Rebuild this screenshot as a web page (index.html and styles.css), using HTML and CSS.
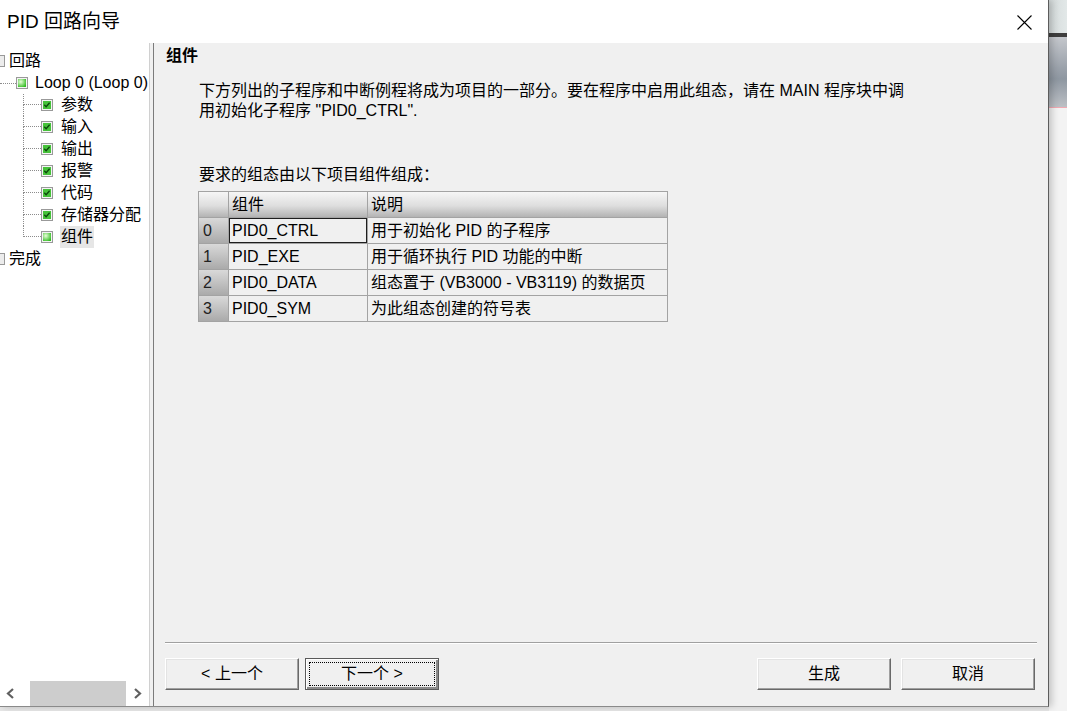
FILE: index.html
```html
<!DOCTYPE html>
<html lang="zh-CN">
<head>
<meta charset="utf-8">
<title>PID 回路向导</title>
<link rel="stylesheet" href="styles.css">
</head>
<body>
<div class="window">
  <div class="titlebar">
    <span class="title">PID 回路向导</span>
    <svg class="close" width="15" height="15" viewBox="0 0 15 15"><path d="M0.5 0.5L14.5 14.5M14.5 0.5L0.5 14.5" stroke="#000" stroke-width="1.1" fill="none"/></svg>
  </div>
  <div class="main">
    <div class="tree">
      <div class="tree-list">
        <div class="row root">
          <svg class="icon root-icon" width="9" height="12" viewBox="0 0 9 12"><rect x="0.5" y="0.5" width="8" height="11" fill="#ececec" stroke="#999"/></svg>
          <span class="label">回路</span>
        </div>
        <div class="row loop">
          <span class="hconn"></span>
          <svg class="icon" width="12" height="12" viewBox="0 0 12 12"><defs><radialGradient id="g1" cx="0.35" cy="0.35" r="0.75"><stop offset="0" stop-color="#e8ffd8"/><stop offset="1" stop-color="#34bc24"/></radialGradient></defs><rect x="0.5" y="0.5" width="11" height="11" fill="#f4f4f4" stroke="#999"/><rect x="2" y="2" width="8" height="8" fill="url(#g1)"/></svg>
          <span class="label">Loop 0 (Loop 0)</span>
        </div>
        <div class="children">
          <div class="row child">
            <span class="conn"><i class="up"></i><i class="down"></i></span>
            <svg class="icon" width="12" height="12" viewBox="0 0 12 12"><rect x="0.5" y="0.5" width="11" height="11" fill="#f4f4f4" stroke="#999"/><rect x="2" y="2" width="8" height="8" fill="#46c23a"/><path d="M3.3 5.8l1.8 1.9 3.5-4" stroke="#0b460b" stroke-width="1.3" fill="none"/></svg>
            <span class="label">参数</span>
          </div>
          <div class="row child">
            <span class="conn"><i class="up"></i><i class="down"></i></span>
            <svg class="icon" width="12" height="12" viewBox="0 0 12 12"><rect x="0.5" y="0.5" width="11" height="11" fill="#f4f4f4" stroke="#999"/><rect x="2" y="2" width="8" height="8" fill="#46c23a"/><path d="M3.3 5.8l1.8 1.9 3.5-4" stroke="#0b460b" stroke-width="1.3" fill="none"/></svg>
            <span class="label">输入</span>
          </div>
          <div class="row child">
            <span class="conn"><i class="up"></i><i class="down"></i></span>
            <svg class="icon" width="12" height="12" viewBox="0 0 12 12"><rect x="0.5" y="0.5" width="11" height="11" fill="#f4f4f4" stroke="#999"/><rect x="2" y="2" width="8" height="8" fill="#46c23a"/><path d="M3.3 5.8l1.8 1.9 3.5-4" stroke="#0b460b" stroke-width="1.3" fill="none"/></svg>
            <span class="label">输出</span>
          </div>
          <div class="row child">
            <span class="conn"><i class="up"></i><i class="down"></i></span>
            <svg class="icon" width="12" height="12" viewBox="0 0 12 12"><rect x="0.5" y="0.5" width="11" height="11" fill="#f4f4f4" stroke="#999"/><rect x="2" y="2" width="8" height="8" fill="#46c23a"/><path d="M3.3 5.8l1.8 1.9 3.5-4" stroke="#0b460b" stroke-width="1.3" fill="none"/></svg>
            <span class="label">报警</span>
          </div>
          <div class="row child">
            <span class="conn"><i class="up"></i><i class="down"></i></span>
            <svg class="icon" width="12" height="12" viewBox="0 0 12 12"><rect x="0.5" y="0.5" width="11" height="11" fill="#f4f4f4" stroke="#999"/><rect x="2" y="2" width="8" height="8" fill="#46c23a"/><path d="M3.3 5.8l1.8 1.9 3.5-4" stroke="#0b460b" stroke-width="1.3" fill="none"/></svg>
            <span class="label">代码</span>
          </div>
          <div class="row child">
            <span class="conn"><i class="up"></i><i class="down"></i></span>
            <svg class="icon" width="12" height="12" viewBox="0 0 12 12"><rect x="0.5" y="0.5" width="11" height="11" fill="#f4f4f4" stroke="#999"/><rect x="2" y="2" width="8" height="8" fill="#46c23a"/><path d="M3.3 5.8l1.8 1.9 3.5-4" stroke="#0b460b" stroke-width="1.3" fill="none"/></svg>
            <span class="label">存储器分配</span>
          </div>
          <div class="row child">
            <span class="conn"><i class="up"></i><i class="down last"></i></span>
            <svg class="icon" width="12" height="12" viewBox="0 0 12 12"><defs><radialGradient id="g2" cx="0.35" cy="0.35" r="0.75"><stop offset="0" stop-color="#e8ffd8"/><stop offset="1" stop-color="#34bc24"/></radialGradient></defs><rect x="0.5" y="0.5" width="11" height="11" fill="#f4f4f4" stroke="#999"/><rect x="2" y="2" width="8" height="8" fill="url(#g2)"/></svg>
            <span class="label selected">组件</span>
          </div>
        </div>
        <div class="row root">
          <svg class="icon root-icon" width="9" height="12" viewBox="0 0 9 12"><rect x="0.5" y="0.5" width="8" height="11" fill="#ececec" stroke="#999"/></svg>
          <span class="label">完成</span>
        </div>
      </div>
      <div class="hscroll">
        <span class="arrow arrow-left"><svg width="10" height="11" viewBox="0 0 10 11"><path d="M8 1L3 5.5L8 10" stroke="#606060" stroke-width="2.2" fill="none"/></svg></span>
        <span class="thumb"></span>
        <span class="arrow arrow-right"><svg width="10" height="11" viewBox="0 0 10 11"><path d="M2 1L7 5.5L2 10" stroke="#606060" stroke-width="2.2" fill="none"/></svg></span>
      </div>
    </div>
    <div class="splitter"></div>
    <div class="content">
      <div class="heading">组件</div>
      <p class="intro">下方列出的子程序和中断例程将成为项目的一部分。要在程序中启用此组态，请在 MAIN 程序块中调<br>用初始化子程序 "PID0_CTRL".</p>
      <p class="req">要求的组态由以下项目组件组成：</p>
      <div class="grid">
        <div class="hd corner"></div>
        <div class="hd">组件</div>
        <div class="hd">说明</div>

        <div class="rh">0</div>
        <div class="cell focus">PID0_CTRL</div>
        <div class="cell">用于初始化 PID 的子程序</div>

        <div class="rh">1</div>
        <div class="cell">PID_EXE</div>
        <div class="cell">用于循环执行 PID 功能的中断</div>

        <div class="rh">2</div>
        <div class="cell">PID0_DATA</div>
        <div class="cell">组态置于 (VB3000 - VB3119) 的数据页</div>

        <div class="rh">3</div>
        <div class="cell">PID0_SYM</div>
        <div class="cell">为此组态创建的符号表</div>
      </div>
      <div class="footer">
        <div class="sep"></div>
        <div class="buttons">
          <button class="btn">&lt; 上一个</button>
          <button class="btn default"><span class="focus-rect">下一个 &gt;</span></button>
          <span class="spacer"></span>
          <button class="btn">生成</button>
          <button class="btn">取消</button>
        </div>
      </div>
    </div>
  </div>
</div>
<div class="desktop">
  <div class="d-top"></div>
  <div class="d-band"></div>
  <div class="d-grad"></div>
  <div class="d-pink"></div>
  <div class="d-rest"></div>
</div>
</body>
</html>
```
FILE: styles.css
```css
html, body {
  margin: 0;
  padding: 0;
}
body {
  background: #e7e7e7;
  display: flex;
  height: 711px;
  overflow: hidden;
  font-family: "Liberation Sans", "Noto Sans CJK SC", sans-serif;
  font-size: 16px;
  color: #000;
}

.window {
  width: 1049px;
  height: 707px;
  box-sizing: border-box;
  border-right: 1px solid #5c5c5c;
  border-bottom: 1px solid #8a8a8a;
  background: #f0f0f0;
  display: flex;
  flex-direction: column;
  flex: none;
  position: relative;
  z-index: 1;
  box-shadow: 3px 0 7px rgba(0, 0, 0, 0.2);
}

.titlebar {
  height: 43px;
  box-sizing: border-box;
  background: #fff;
  display: flex;
  align-items: center;
  justify-content: space-between;
  padding: 0 16px 0 7px;
  flex: none;
}
.title {
  font-size: 19px;
  line-height: 24px;
}
.close {
  display: block;
  margin-top: 1px;
}

.main {
  flex: 1;
  display: flex;
  min-height: 0;
}

/* tree */
.tree {
  width: 149px;
  background: #fff;
  border-right: 1px solid #d0d0d0;
  display: flex;
  flex-direction: column;
  overflow: hidden;
  flex: none;
}
.tree-list {
  flex: 1;
  padding-top: 7px;
}
.row {
  height: 22px;
  display: flex;
  align-items: center;
  white-space: nowrap;
  line-height: 20px;
}
.icon {
  display: block;
  flex: none;
}
.root-icon {
  margin-left: -4px;
}
.root .label {
  margin-left: 4px;
}
.hconn {
  width: 16px;
  height: 0;
  border-top: 1px dotted #8c8c8c;
  flex: none;
}
.loop .label {
  margin-left: 7px;
}
.child {
  padding-left: 23px;
}
.conn {
  width: 18px;
  height: 22px;
  display: grid;
  grid-template-rows: 11px 11px;
  flex: none;
}
.conn i {
  display: block;
  box-sizing: border-box;
}
.conn .up {
  border-left: 1px dotted #8c8c8c;
  border-bottom: 1px dotted #8c8c8c;
}
.conn .down {
  border-left: 1px dotted #8c8c8c;
}
.conn .down.last {
  border-left: none;
}
.child .label {
  margin-left: 7px;
  padding: 0 1px;
}
.label.selected {
  background: #e6e6e6;
  line-height: 22px;
}

.hscroll {
  height: 25px;
  display: flex;
  background: #fff;
  flex: none;
}
.arrow {
  display: flex;
  align-items: center;
  flex: none;
  box-sizing: border-box;
}
.arrow-left {
  width: 30px;
  padding-left: 5px;
}
.arrow-right {
  flex: 1;
  padding-left: 7px;
}
.thumb {
  width: 96px;
  background: #cdcdcd;
  flex: none;
}

.splitter {
  width: 3px;
  background: #f0f0f0;
  border-right: 1px solid #7b7b7b;
  flex: none;
}

/* content */
.content {
  flex: 1;
  display: flex;
  flex-direction: column;
  padding-top: 3px;
  min-width: 0;
}
.heading {
  margin-left: 12px;
  font-weight: bold;
  line-height: 20px;
  height: 20px;
}
.intro {
  margin: 15px 0 0 45px;
  line-height: 20px;
  white-space: nowrap;
}
.req {
  margin: 44px 0 0 45px;
  line-height: 20px;
}
.grid {
  margin: 6px 0 0 44px;
  width: 470px;
  box-sizing: border-box;
  display: grid;
  grid-template-columns: 29px 138px 299px;
  grid-auto-rows: 25px;
  gap: 1px;
  background: #a3a3a3;
  border: 1px solid #a3a3a3;
}
.grid > div {
  display: flex;
  align-items: center;
  white-space: nowrap;
  line-height: 20px;
  padding-left: 3px;
}
.hd {
  background: linear-gradient(#f6f6f6, #dedede 55%, #b3b3b3);
}
.rh {
  background: linear-gradient(#d9d9d9, #aaaaaa);
  color: #222;
  padding-left: 4px !important;
}
.cell {
  background: #f0f0f0;
}
.cell.focus {
  box-shadow: inset 0 0 0 1px #1e1e1e;
}

.footer {
  margin-top: auto;
}
.sep {
  border-top: 1px solid #a0a0a0;
  border-bottom: 1px solid #fff;
  margin: 0 11px;
}
.buttons {
  display: flex;
  margin: 14px 13px 16px 11px;
  gap: 6px;
}
.spacer {
  flex: 1;
}
.buttons .btn + .btn + .spacer + .btn + .btn {
  margin-left: 4px;
}
.btn {
  width: 134px;
  height: 32px;
  box-sizing: border-box;
  background: #f0f0f0;
  border: 1px solid;
  border-color: #fff #696969 #696969 #fff;
  box-shadow: inset -1px -1px 0 #a0a0a0, inset 1px 1px 0 #e3e3e3;
  font: inherit;
  color: #000;
  padding: 0;
  display: flex;
  align-items: center;
  justify-content: center;
  line-height: 20px;
}
.btn.default {
  border-color: #5a5a5a;
  box-shadow: inset 1px 1px 0 #fff, inset -2px -2px 0 #8a8a8a;
  padding: 3px;
}
.focus-rect {
  flex: 1;
  align-self: stretch;
  border: 1px dotted #000;
  display: flex;
  align-items: center;
  justify-content: center;
}

/* desktop strip at the right */
.desktop {
  flex: 1;
  display: flex;
  flex-direction: column;
  height: 711px;
}
.d-top {
  height: 33px;
  background: linear-gradient(90deg, #d4dada, #e2e8e8);
}
.d-band {
  height: 4px;
  background: #3e3e3e;
}
.d-grad {
  height: 70px;
  background: linear-gradient(#c4c7cc, #9aa1aa 45%, #8e97a1 60%, #bcc0c5);
}
.d-pink {
  height: 1px;
  background: #f0a9b2;
}
.d-rest {
  flex: 1;
  background: #f3f3f3;
}
```
